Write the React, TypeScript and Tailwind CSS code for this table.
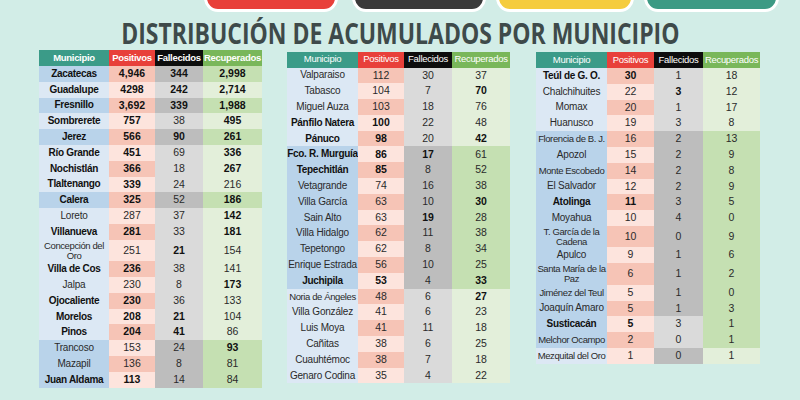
type Row = {
  n: string;
  p: string;
  f: string;
  r: string;
  b: string; // bold mask: name, pos, fal, rec
  d: string; // dark mask: muni, fal, rec
  tall?: boolean;
  small?: boolean;
};

const left: Row[] = [
  { n: "Zacatecas", p: "4,946", f: "344", r: "2,998", b: "1111", d: "111" },
  { n: "Guadalupe", p: "4298", f: "242", r: "2,714", b: "1111", d: "000" },
  { n: "Fresnillo", p: "3,692", f: "339", r: "1,988", b: "1111", d: "111" },
  { n: "Sombrerete", p: "757", f: "38", r: "495", b: "1101", d: "000" },
  { n: "Jerez", p: "566", f: "90", r: "261", b: "1111", d: "111" },
  { n: "Río Grande", p: "451", f: "69", r: "336", b: "1101", d: "000" },
  { n: "Nochistlán", p: "366", f: "18", r: "267", b: "1101", d: "000" },
  { n: "Tlaltenango", p: "339", f: "24", r: "216", b: "1100", d: "000" },
  { n: "Calera", p: "325", f: "52", r: "186", b: "1101", d: "111" },
  { n: "Loreto", p: "287", f: "37", r: "142", b: "0001", d: "000" },
  { n: "Villanueva", p: "281", f: "33", r: "181", b: "1101", d: "000" },
  { n: "Concepción del|Oro", p: "251", f: "21", r: "154", b: "0010", d: "000", tall: true },
  { n: "Villa de Cos", p: "236", f: "38", r: "141", b: "1100", d: "000" },
  { n: "Jalpa", p: "230", f: "8", r: "173", b: "0001", d: "000" },
  { n: "Ojocaliente", p: "230", f: "36", r: "133", b: "1100", d: "000" },
  { n: "Morelos", p: "208", f: "21", r: "104", b: "1110", d: "000" },
  { n: "Pinos", p: "204", f: "41", r: "86", b: "1110", d: "000" },
  { n: "Trancoso", p: "153", f: "24", r: "93", b: "0001", d: "111" },
  { n: "Mazapil", p: "136", f: "8", r: "81", b: "0000", d: "111" },
  { n: "Juan Aldama", p: "113", f: "14", r: "84", b: "1100", d: "111" },
];

const middle: Row[] = [
  { n: "Valparaiso", p: "112", f: "30", r: "37", b: "0000", d: "000" },
  { n: "Tabasco", p: "104", f: "7", r: "70", b: "0001", d: "000" },
  { n: "Miguel Auza", p: "103", f: "18", r: "76", b: "0000", d: "000" },
  { n: "Pánfilo Natera", p: "100", f: "22", r: "48", b: "1100", d: "000" },
  { n: "Pánuco", p: "98", f: "20", r: "42", b: "1101", d: "000" },
  { n: "Fco. R. Murguía", p: "86", f: "17", r: "61", b: "1110", d: "111" },
  { n: "Tepechitlán", p: "85", f: "8", r: "52", b: "1100", d: "111" },
  { n: "Vetagrande", p: "74", f: "16", r: "38", b: "0000", d: "111" },
  { n: "Villa García", p: "63", f: "10", r: "30", b: "0001", d: "111" },
  { n: "Sain Alto", p: "63", f: "19", r: "28", b: "0010", d: "111" },
  { n: "Villa Hidalgo", p: "62", f: "11", r: "38", b: "0000", d: "111" },
  { n: "Tepetongo", p: "62", f: "8", r: "34", b: "0000", d: "111" },
  { n: "Enrique Estrada", p: "56", f: "10", r: "25", b: "0000", d: "111" },
  { n: "Juchipila", p: "53", f: "4", r: "33", b: "1101", d: "111" },
  { n: "Noria de Ángeles", p: "48", f: "6", r: "27", b: "0001", d: "000", small: true },
  { n: "Villa González", p: "41", f: "6", r: "23", b: "0000", d: "000" },
  { n: "Luis Moya", p: "41", f: "11", r: "18", b: "0000", d: "000" },
  { n: "Cañitas", p: "38", f: "6", r: "25", b: "0000", d: "000" },
  { n: "Cuauhtémoc", p: "38", f: "7", r: "18", b: "0000", d: "000" },
  { n: "Genaro Codina", p: "35", f: "4", r: "22", b: "0000", d: "000" },
];

const right: Row[] = [
  { n: "Teúl de G. O.", p: "30", f: "1", r: "18", b: "1100", d: "000" },
  { n: "Chalchihuites", p: "22", f: "3", r: "12", b: "0010", d: "000" },
  { n: "Momax", p: "20", f: "1", r: "17", b: "0000", d: "000" },
  { n: "Huanusco", p: "19", f: "3", r: "8", b: "0000", d: "000" },
  { n: "Florencia de B. J.", p: "16", f: "2", r: "13", b: "0000", d: "111", small: true },
  { n: "Apozol", p: "15", f: "2", r: "9", b: "0000", d: "111" },
  { n: "Monte Escobedo", p: "14", f: "2", r: "8", b: "0000", d: "111", small: true },
  { n: "El Salvador", p: "12", f: "2", r: "9", b: "0000", d: "111" },
  { n: "Atolinga", p: "11", f: "3", r: "5", b: "1100", d: "111" },
  { n: "Moyahua", p: "10", f: "4", r: "0", b: "0000", d: "111" },
  { n: "T. García de la|Cadena", p: "10", f: "0", r: "9", b: "0000", d: "111", tall: true },
  { n: "Apulco", p: "9", f: "1", r: "6", b: "0000", d: "111" },
  { n: "Santa María de la|Paz", p: "6", f: "1", r: "2", b: "0000", d: "111", tall: true },
  { n: "Jiménez del Teul", p: "5", f: "1", r: "0", b: "0000", d: "111", small: true },
  { n: "Joaquín Amaro", p: "5", f: "1", r: "3", b: "0000", d: "111" },
  { n: "Susticacán", p: "5", f: "3", r: "1", b: "1100", d: "101" },
  { n: "Melchor Ocampo", p: "2", f: "0", r: "1", b: "0000", d: "101", small: true },
  { n: "Mezquital del Oro", p: "1", f: "0", r: "1", b: "0000", d: "010", small: true },
];

function Table({ rows, w, headBold }: { rows: Row[]; w: string[]; headBold?: boolean }) {
  return (
    <div className="flex flex-col">
      <div
        className={`flex h-[16px] whitespace-nowrap text-[9.5px] tracking-[-0.3px] text-white ${
          headBold ? "font-bold" : ""
        }`}
      >
        <div className={`${w[0]} flex items-center justify-center bg-[#3b9b88]`}>Municipio</div>
        <div className={`${w[1]} flex items-center justify-center bg-[#e8403a]`}>Positivos</div>
        <div className={`${w[2]} flex items-center justify-center bg-[#0d0d0d]`}>Fallecidos</div>
        <div className={`${w[3]} flex items-center justify-center bg-[#79b75a]`}>Recuperados</div>
      </div>
      {rows.map((row, i) => {
        const h = row.tall ? "h-[21.5px]" : "h-[15.8px]";
        const bold = (k: number) => (row.b[k] === "1" ? "font-bold text-[#111]" : "text-[#2a2a2a]");
        return (
          <div key={row.n} className={`flex ${h} whitespace-nowrap text-[10.5px]`}>
            <div
              className={`${w[0]} flex flex-col items-center justify-center overflow-hidden text-center leading-[10px] ${
                row.d[0] === "1" ? "bg-[#b9d3ea]" : "bg-[#dce8f4]"
              } ${bold(0)} ${
                row.small || row.tall
                  ? "text-[9.5px] tracking-[-0.4px]"
                  : row.b[0] === "1"
                    ? "text-[10px] tracking-[-0.3px]"
                    : "text-[10px] tracking-[-0.2px]"
              }`}
            >
              {row.n.split("|").map((s) => (
                <span key={s}>{s}</span>
              ))}
            </div>
            <div
              className={`${w[1]} flex items-center justify-center ${
                i % 2 === 0 ? "bg-[#f6c4b6]" : "bg-[#fde4dd]"
              } ${bold(1)}`}
            >
              {row.p}
            </div>
            <div
              className={`${w[2]} flex items-center justify-center ${
                row.d[1] === "1" ? "bg-[#bdbdbd]" : "bg-[#dadada]"
              } ${bold(2)}`}
            >
              {row.f}
            </div>
            <div
              className={`${w[3]} flex items-center justify-center ${
                row.d[2] === "1" ? "bg-[#c5e0b2]" : "bg-[#e3efda]"
              } ${bold(3)}`}
            >
              {row.r}
            </div>
          </div>
        );
      })}
    </div>
  );
}

export default function App() {
  return (
    <div className="w-[800px] h-[400px] overflow-hidden bg-[#d2ede7] font-['Liberation_Sans',Arial,sans-serif]">
      {/* tabs cut off at the top */}
      <div className="flex h-[12px] items-end">
        <div className="ml-[204px] w-[134px] h-[40px] shrink-0 rounded-[14px] border-[3px] border-white bg-[#e8403a]" />
        <div className="ml-[14px] w-[134px] h-[40px] shrink-0 rounded-[14px] border-[3px] border-white bg-[#3a3a3a]" />
        <div className="ml-[10px] w-[138px] h-[40px] shrink-0 rounded-[14px] border-[3px] border-white bg-[#f5cc3e]" />
        <div className="ml-[10px] w-[135px] h-[40px] shrink-0 rounded-[14px] border-[3px] border-white bg-[#3c9a84]" />
      </div>
      <div className="flex h-[38px] items-center justify-center pt-[3px]">
        <h1 className="scale-x-[0.82] whitespace-nowrap font-['Open_Sans',sans-serif] text-[28px] font-bold leading-none text-[#3e4a4a]">
          DISTRIBUCIÓN DE ACUMULADOS POR MUNICIPIO
        </h1>
      </div>
      <div className="flex items-start pl-[39px]">
        <Table rows={left} w={["w-[70px]", "w-[46px]", "w-[48px]", "w-[59px]"]} headBold />
        <div className="ml-[25px] mt-[1.5px]">
          <Table rows={middle} w={["w-[71px]", "w-[46px]", "w-[48px]", "w-[58px]"]} />
        </div>
        <div className="ml-[26px] mt-[2px]">
          <Table rows={right} w={["w-[71px]", "w-[47px]", "w-[49px]", "w-[57px]"]} />
        </div>
      </div>
    </div>
  );
}
